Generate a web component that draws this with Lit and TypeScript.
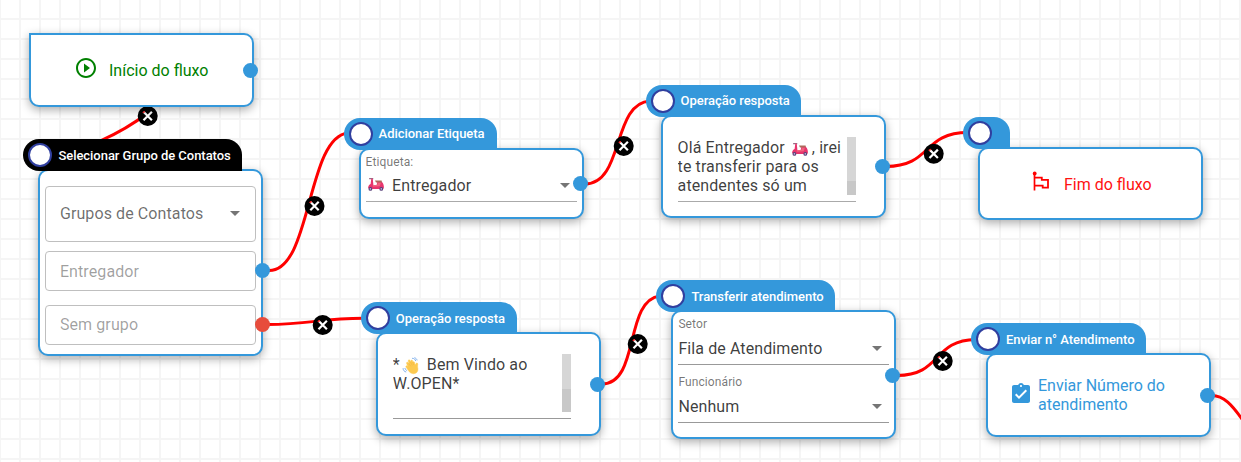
import { LitElement, html, svg, css, nothing } from "lit";
import { customElement, property } from "lit/decorators.js";
import { styleMap } from "lit/directives/style-map.js";

const scooter = html`<svg class="emoji" width="18" height="18" viewBox="0 0 18 18">
  <path d="M2.6 2.7h3.2" stroke="#9b6b86" stroke-width="1.2" stroke-linecap="round"/>
  <path d="M4.3 2.6l1.5.3.6 6.2h3.2l.7-3.1 4.7.1c1.500 1.400 2 3.500 1.900 6.300l-2 .5H5.600L1 12.200C1.300 9.600 2.300 8.300 3.600 8z" fill="#e8356d"/>
  <path d="M8 4.600h6.300c.8 0 .8 1.900 0 1.900H9z" fill="#ad6a5b"/>
  <path d="M5.800 9h4.400l.7-2.300 3 .1-1.200 3.400-6.900.5z" fill="#f0647f"/>
  <circle cx="3.400" cy="12.900" r="1.900" fill="#573f78"/><circle cx="14.300" cy="12.900" r="1.900" fill="#573f78"/>
  <circle cx="3.400" cy="12.900" r=".8" fill="#c9b7dc"/><circle cx="14.300" cy="12.900" r=".8" fill="#c9b7dc"/>
</svg>`;

const wave = html`<svg class="emoji wave" width="18" height="18" viewBox="0 0 18 18">
  <path d="M4.600 6.500c-.5-1 .7-1.800 1.400-1L7 6.600 6.300 3.900c-.2-1.100 1.300-1.500 1.700-.5l.7 1.700.2-1.300c.2-1 1.600-.9 1.700.1l.3 1.200c.5-.8 1.600-.5 1.700.4l.5 2.600 1-1.700c.6-.8 1.800-.2 1.700.8-.4 2.100-.1 3.200.1 4.600.3 3-1.700 5-4.600 4.900-2.200 0-3.800-1.400-4.900-3.100L4 10.100c-.5-1 .5-1.700 1.300-1.100L6 9.600z" fill="#fcc94f" stroke="#fcc94f" stroke-width=".5"/>
  <path d="M6.600 6.400l2.200 3M8.600 5l1.600 3.400M10.800 5l.8 3" stroke="#eda83a" stroke-width=".4" fill="none"/>
  <path d="M10.500 1.300c1.600 0 2.700.9 3.100 2.400M12.800.8c1.200.4 1.900 1.200 2.200 2.200M1.100 11.600c.1 1.700 1 2.900 2.700 3.300M3 11.400c.2 1 .8 1.700 1.700 2" stroke="#7fb0ee" stroke-width="1" fill="none" stroke-linecap="round"/>
</svg>`;

const play = html`<svg width="24" height="24" viewBox="0 0 24 24" fill="#008000"><path d="M10 16.500l6-4.500-6-4.500v9zM12 2C6.480 2 2 6.480 2 12s4.480 10 10 10 10-4.480 10-10S17.520 2 12 2zm0 18c-4.410 0-8-3.590-8-8s3.590-8 8-8 8 3.590 8 8-3.590 8-8 8z"/></svg>`;
const flag = html`<svg width="20" height="22" viewBox="0 0 20 22" fill="none" stroke="#ff0000"><circle cx="3.700" cy="3.500" r="1.900" fill="#ff0000" stroke="none"/><path d="M3.500 3v17.500" stroke-width="1.700"/><path d="M4 7.700h6.800v2.100h6.200v7.900h-5.300v-2H4" stroke-width="1.800"/></svg>`;
const task = html`<svg width="24" height="24" viewBox="0 0 24 24" fill="#3498db"><path d="M19 3h-4.180C14.400 1.840 13.300 1 12 1c-1.300 0-2.400.84-2.820 2H5c-1.100 0-2 .9-2 2v14c0 1.100.9 2 2 2h14c1.100 0 2-.9 2-2V5c0-1.100-.9-2-2-2zm-7 0c.55 0 1 .45 1 1s-.45 1-1 1-1-.45-1-1 .45-1 1-1zm-2 14l-4-4 1.410-1.410L10 14.170l6.590-6.590L18 9l-8 8z"/></svg>`;

interface Port { y: number; error?: boolean; shift?: number }
interface FlowNode {
  x: number; y: number; h: number;
  title?: string; kind: string; active?: boolean;
  headWidth?: number; ports: Port[]; body: unknown;
}

const nodes: FlowNode[] = [
  { x: 29, y: 33, h: 74, kind: "start", ports: [{ y: 37 }],
    body: html`${play}<span>Início do fluxo</span>` },
  { x: 38.4, y: 169, h: 187, kind: "group", title: "Selecionar Grupo de Contatos", active: true, headWidth: 219,
    ports: [{ y: 101.500, shift: 2.900 }, { y: 155.500, error: true, shift: 2.900 }],
    body: html`<div class="field tall"><span>Grupos de Contatos</span><i class="caret"></i></div>
      <div class="field pale">Entregador</div><div class="field pale last">Sem grupo</div>` },
  { x: 358.6, y: 147.600, h: 71, kind: "tag", title: "Adicionar Etiqueta", headWidth: 153, ports: [{ y: 35.900 }],
    body: html`<div class="label">Etiqueta:</div>
      <div class="select soft"><span class="withicon">${scooter}Entregador</span><i class="caret"></i></div>` },
  { x: 660.6, y: 114.600, h: 103, kind: "message", title: "Operação resposta", headWidth: 155, ports: [{ y: 51.900 }],
    body: html`<div class="area soft"><div class="copy">Olá Entregador ${scooter}, irei<br>te transferir para os<br>atendentes só um</div><div class="scroll"><div class="thumb"></div></div></div>` },
  { x: 978, y: 147, h: 73, kind: "end", title: "", headWidth: 47, ports: [],
    body: html`${flag}<span>Fim do fluxo</span>` },
  { x: 375.800, y: 332, h: 104, kind: "message", title: "Operação resposta", headWidth: 156, ports: [{ y: 52 }],
    body: html`<div class="area"><div class="copy">*${wave} Bem Vindo ao<br>W.OPEN*</div><div class="scroll"><div class="thumb big"></div></div></div>` },
  { x: 671.4, y: 310, h: 129, kind: "transfer", title: "Transferir atendimento", headWidth: 179, ports: [{ y: 65 }],
    body: html`<div class="label">Setor</div><div class="select"><span>Fila de Atendimento</span><i class="caret"></i></div>
      <div class="label second">Funcionário</div><div class="select"><span>Nenhum</span><i class="caret"></i></div>` },
  { x: 986, y: 353.400, h: 84, kind: "send", title: "Enviar n° Atendimento", headWidth: 175, ports: [{ y: 42 }],
    body: html`${task}<span>Enviar Número do<br>atendimento</span>` },
];

const edges = [
  "M100 141C116 134 131 126 149 112",
  "M268 270.500C312 273 306 137 348 133",
  "M585 184C624 184 612 103 650 101",
  "M886 166.500C932 166.500 922 132.500 968 132.500",
  "M267 324.500C312 324.500 320 318 366 318.300",
  "M602 384C640 384 624 300 660 296",
  "M897 375.500C942 375.500 932 340 976 339.500",
  "M1211 395.500C1223 395 1232 404 1246 425",
];
const removers = [[147.700, 116], [314.500, 206], [623.700, 146], [933.700, 153.800], [322.700, 325], [637.700, 344], [942.700, 361]];

@customElement("flow-node")
class FlowNodeElement extends LitElement {
  @property({ attribute: false }) node!: FlowNode;

  static styles = css`
    :host { display: block; width: 225px; }
    * { box-sizing: border-box; }
    .wrap { display: flex; flex-direction: column; position: relative; }
    .head {
      height: 32px; margin: -30px 0 -2px -15px; z-index: 1; padding-left: 5px;
      display: flex; align-items: center; gap: 6px; white-space: nowrap;
      background: #3498db; color: #fff; border-radius: 17px 17px 0 17px;
      font-size: 13px; font-weight: 500; letter-spacing: -.04px;
    }
    .head.active { background: #000; }
    .input { flex: none; width: 24px; height: 24px; border-radius: 50%; background: #fff; border: 2px solid #303f9f; }
    .box {
      background: #fff; border: 2px solid #3498db; border-radius: 10px;
      box-shadow: 0 3px 10px rgba(0, 0, 0, .33);
      color: rgba(0, 0, 0, .77); font-size: 16px; line-height: 19px; letter-spacing: .1px;
      display: flex; flex-direction: column;
    }
    .start, .end { flex-direction: row; align-items: center; }
    .start { border-top-left-radius: 0; color: #008000; padding-left: 43px; gap: 11px; letter-spacing: 0; }
    .start svg { margin-bottom: 5px; }
    .end { color: #ff1212; padding: 1px 0 0 51px; gap: 13px; letter-spacing: 0; }
    .end svg { margin-bottom: 6px; }
    .send { flex-direction: row; align-items: center; color: #3498db; padding-left: 20px; gap: 6px; letter-spacing: 0; }
    .send svg { margin-bottom: 3px; margin-left: 1px; margin-right: -1px; }
    .group { padding: 15px 5px 0 5px; }
    .field {
      height: 40px; border: 1px solid #bfbfbf; border-radius: 4px; padding: 0 15px 0 13.500px;
      display: flex; align-items: center; justify-content: space-between;
      margin-top: 9px; color: rgba(0, 0, 0, .58); letter-spacing: .1px;
    }
    .tall { height: 56px; margin-top: 0; padding-bottom: 1px; }
    .pale { color: rgba(0, 0, 0, .38); }
    .last { margin-top: 14px; padding-bottom: 1px; }
    .caret { width: 0; height: 0; border: 5px solid transparent; border-top-color: #757575; border-bottom: 0; }
    .tag, .transfer { padding: 5px 5px 0; }
    .label { font-size: 12px; line-height: 14px; color: rgba(0, 0, 0, .55); letter-spacing: .1px; }
    .second { margin-top: 10px; }
    .select {
      height: 34px; border-bottom: 1px solid #999; display: flex; align-items: center;
      justify-content: space-between; padding: 2px 7px 0 0;
    }
    .tag .select { height: 33px; padding-top: 1px; }
    .withicon { display: flex; align-items: center; gap: 7px; padding-left: 1.500px; }
    .soft { border-bottom-color: #aaa !important; }
    .message { padding: 20px 28px 0 15px; }
    .area { display: flex; justify-content: space-between; height: 65px; border-bottom: 1px solid #999; }
    .copy { white-space: nowrap; padding-top: 1px; height: 60px; overflow: hidden; }
    .copy .emoji { vertical-align: -3px; margin: -3px 3px -3px 2px; }
    .copy .wave { vertical-align: -2px; }
    .scroll { width: 9px; height: 58px; background: #d6d6d6; display: flex; align-items: flex-end; }
    .thumb { width: 9px; height: 14px; background: #c8c8c8; }
    .thumb.big { height: 23px; }
    .port { position: absolute; width: 15px; height: 15px; margin-top: -7.500px; border-radius: 50%; background: #3498db; }
    .port.error { background: #e74c3c; }
  `;

  render() {
    const n = this.node;
    return html`<div class="wrap">
      ${n.title !== undefined ? html`<div class="head ${n.active ? "active" : ""}" style=${styleMap({ width: `${n.headWidth}px` })}>
        <div class="input"></div><span>${n.title}</span></div>` : nothing}
      <div class="box ${n.kind}" style=${styleMap({ height: `${n.h}px` })}>${n.body}</div>
      ${n.ports.map(p => html`<div class="port ${p.error ? "error" : ""}" style=${styleMap({ top: `${p.y}px`, right: `${-4 - (p.shift ?? 0)}px` })}></div>`)}
    </div>`;
  }
}

@customElement("app-root")
class AppRoot extends LitElement {
  static styles = css`
    :host {
      display: block; position: relative; height: 462px; overflow: hidden;
      font-family: Roboto, "Liberation Sans", sans-serif;
      background-color: #fff;
      background-image: linear-gradient(to right, #f5f5f5 2px, transparent 2px), linear-gradient(to bottom, #f5f5f5 2px, transparent 2px);
      background-size: 20px 20px; background-position: 19px 18px;
    }
    .wires { position: absolute; inset: 0; }
    flow-node { position: absolute; }
  `;

  render() {
    return html`<svg class="wires" width="1241" height="462" fill="none">
        ${edges.map(d => svg`<path d=${d} stroke="#ff0000" stroke-width="3"/>`)}
        ${removers.map(([x, y]) => svg`<g transform="translate(${x} ${y})"><circle r="10" fill="#000"/>
          <path d="M-4.200 -4.200L4.200 4.200M4.200 -4.200L-4.200 4.200" stroke="#fff" stroke-width="2.200"/>
          <path d="M-5 -3.500L-2.800 -4.300" stroke="#f00" stroke-width="1.300"/></g>`)}
      </svg>
      ${nodes.map(n => html`<flow-node .node=${n} style=${styleMap({ left: `${n.x}px`, top: `${n.y}px` })}></flow-node>`)}`;
  }
}
